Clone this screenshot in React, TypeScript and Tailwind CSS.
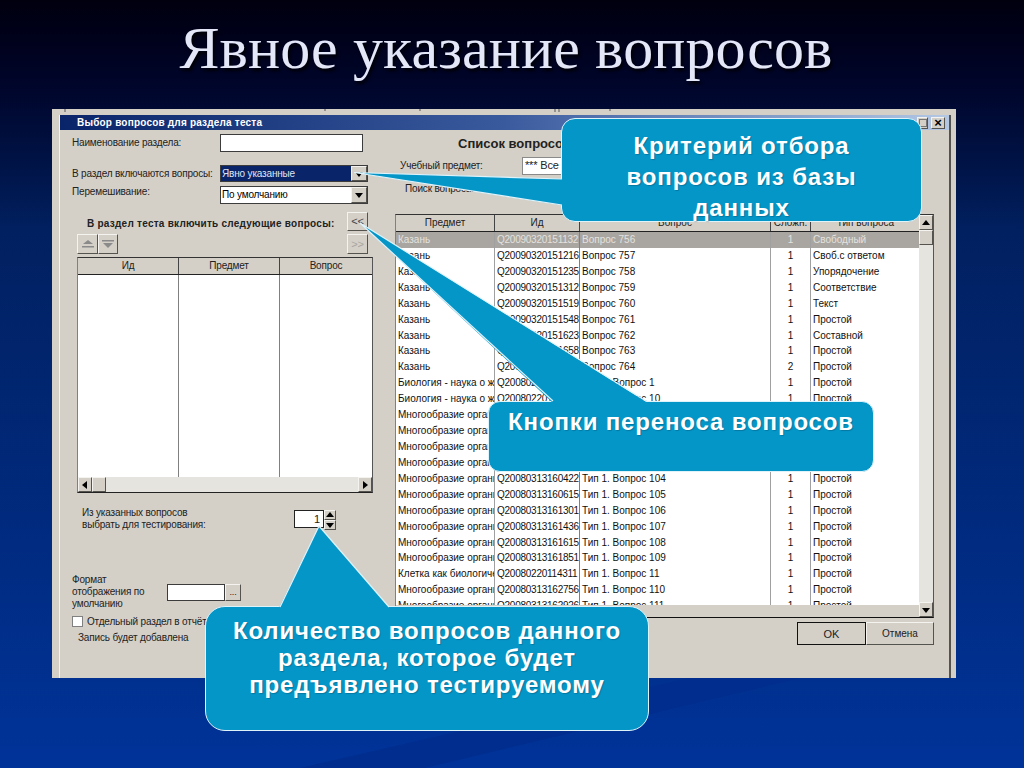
import React from "react";

type Row = [string, string, string, string, string];

const K = "Казань";
const B = "Биология - наука о жизни";
const M = "Многообразие организмов";
const rows: Row[] = [
  [K, "Q20090320151132", "Вопрос 756", "1", "Свободный"],
  [K, "Q20090320151216", "Вопрос 757", "1", "Своб.с ответом"],
  [K, "Q20090320151235", "Вопрос 758", "1", "Упорядочение"],
  [K, "Q20090320151312", "Вопрос 759", "1", "Соответствие"],
  [K, "Q20090320151519", "Вопрос 760", "1", "Текст"],
  [K, "Q20090320151548", "Вопрос 761", "1", "Простой"],
  [K, "Q20090320151623", "Вопрос 762", "1", "Составной"],
  [K, "Q20090320151658", "Вопрос 763", "1", "Простой"],
  [K, "Q20090320151720", "Вопрос 764", "2", "Простой"],
  [B, "Q20080220113940", "Тип 1. Вопрос 1", "1", "Простой"],
  [B, "Q20080220114010", "Тип 1. Вопрос 10", "1", "Простой"],
  [M, "Q20080313155900", "Тип 1. Вопрос 100", "1", "Простой"],
  [M, "Q20080313160010", "Тип 1. Вопрос 101", "1", "Простой"],
  [M, "Q20080313160120", "Тип 1. Вопрос 102", "1", "Простой"],
  [M, "Q20080313160240", "Тип 1. Вопрос 103", "1", "Простой"],
  [M, "Q20080313160422", "Тип 1. Вопрос 104", "1", "Простой"],
  [M, "Q20080313160615", "Тип 1. Вопрос 105", "1", "Простой"],
  [M, "Q20080313161301", "Тип 1. Вопрос 106", "1", "Простой"],
  [M, "Q20080313161436", "Тип 1. Вопрос 107", "1", "Простой"],
  [M, "Q20080313161615", "Тип 1. Вопрос 108", "1", "Простой"],
  [M, "Q20080313161851", "Тип 1. Вопрос 109", "1", "Простой"],
  ["Клетка как биологическая", "Q20080220114311", "Тип 1. Вопрос 11", "1", "Простой"],
  [M, "Q20080313162756", "Тип 1. Вопрос 110", "1", "Простой"],
  [M, "Q20080313162926", "Тип 1. Вопрос 111", "1", "Простой"],
];

const raised =
  "border border-t-[#f4f3f0] border-l-[#f4f3f0] border-r-[#55534e] border-b-[#55534e] bg-[#d4d0c8]";

function Tri({ dir, color = "#000" }: { dir: "up" | "down" | "left" | "right"; color?: string }) {
  const pts = {
    up: "4,1 0,6 8,6",
    down: "0,2 8,2 4,7",
    left: "6,0 6,8 1,4",
    right: "2,0 2,8 7,4",
  }[dir];
  return (
    <svg width="8" height="8" viewBox="0 0 8 8">
      <polygon points={pts} fill={color} />
    </svg>
  );
}

function Select({ text, active }: { text: string; active?: boolean }) {
  return (
    <div className="flex h-full w-[148px] items-stretch border border-[#3c3c3c] bg-white">
      <div className={`flex-1 pl-[1px] leading-[16px] ${active ? "bg-[#0a246a] text-[#dfe4f0]" : "text-black"}`}>{text}</div>
      <div className={`flex w-[16px] items-center justify-center ${raised}`}>
        <Tri dir="down" />
      </div>
    </div>
  );
}

function LeftPane() {
  return (
    <div className="flex w-[335px] shrink-0 flex-col pl-[12px] tracking-[-0.17px]">
      <div className="mt-[4px] flex h-[18px] items-center">
        <div className="w-[148px]">Наименование раздела:</div>
        <div className="h-full w-[143px] border border-[#3c3c3c] bg-white" />
      </div>
      <div className="mt-[13px] flex h-[17px] items-center">
        <div className="w-[148px]">В раздел включаются вопросы:</div>
        <Select text="Явно указанные" active />
      </div>
      <div className="mt-[4px] flex h-[18px] items-center">
        <div className="w-[148px] self-start">Перемешивание:</div>
        <Select text="По умолчанию" />
      </div>
      <div className="mt-[8px] flex h-[19px] items-center">
        <div className="w-[275px] pt-[4px] pl-[15px] text-[10px] font-bold tracking-[0.25px]">В раздел теста включить следующие вопросы:</div>
        <div className={`flex h-full w-[21px] items-center justify-center text-[11px] leading-none text-[#444] ${raised}`}>&lt;&lt;</div>
      </div>
      <div className="mt-[3px] flex h-[20px] w-[296px] justify-between pl-[5px]">
        <div className="flex">
          <div className={`flex w-[21px] items-center justify-center ${raised}`}>
            <svg width="14" height="10" viewBox="0 0 14 10">
              <polygon points="7,1 12,5 2,5" fill="#8a8a8a" />
              <rect x="1" y="7" width="12" height="1.5" fill="#8a8a8a" />
            </svg>
          </div>
          <div className={`flex w-[20px] items-center justify-center ${raised}`}>
            <svg width="14" height="10" viewBox="0 0 14 10">
              <rect x="1" y="1" width="12" height="1.5" fill="#8a8a8a" />
              <polygon points="2,4 12,4 7,9" fill="#8a8a8a" />
            </svg>
          </div>
        </div>
        <div className={`flex w-[21px] items-center justify-center text-[11px] leading-none text-[#a8a6a0] ${raised}`}>&gt;&gt;</div>
      </div>
      <div className="mt-[3px] ml-[5px] flex h-[236px] w-[296px] flex-col border border-t-[#333] border-l-[#808080] border-r-[#555] border-b-[#222]">
        <div className="grid h-[17px] shrink-0 grid-cols-[101px_101px_92px] border-b border-[#222] text-center leading-[16px]">
          <div className="border-r border-[#444]">Ид</div>
          <div className="border-r border-[#444]">Предмет</div>
          <div>Вопрос</div>
        </div>
        <div className="grid flex-1 grid-cols-[101px_101px_92px] bg-white">
          <div className="border-r border-[#808080]" />
          <div className="border-r border-[#808080]" />
          <div />
        </div>
        <div className="flex h-[15px] shrink-0 bg-[#e6e4df]">
          <div className={`flex w-[14px] items-center justify-center ${raised}`}>
            <Tri dir="left" />
          </div>
          <div className={`w-[14px] ${raised}`} />
          <div className="flex-1" />
          <div className={`flex w-[14px] items-center justify-center ${raised}`}>
            <Tri dir="right" />
          </div>
        </div>
      </div>
      <div className="mt-[17px] flex h-[18px] items-center">
        <div className="w-[222px] pl-[10px] leading-[12px]">
          Из указанных вопросов
          <br />
          выбрать для тестирования:
        </div>
        <div className="flex h-full w-[30px] items-center justify-end border border-[#222] bg-white pr-[3px] text-[11px]">1</div>
        <div className="flex h-full w-[12px] flex-col">
          <div className={`flex flex-1 items-center justify-center ${raised}`}>
            <Tri dir="up" />
          </div>
          <div className={`flex flex-1 items-center justify-center ${raised}`}>
            <Tri dir="down" />
          </div>
        </div>
      </div>
      <div className="mt-[46px] flex h-[36px] items-center">
        <div className="w-[95px] leading-[12px]">
          Формат
          <br />
          отображения по
          <br />
          умолчанию
        </div>
        <div className="h-[17px] w-[58px] border border-[#3c3c3c] bg-white" />
        <div className={`flex h-[17px] w-[16px] items-center justify-center text-[9px] leading-none ${raised}`}>...</div>
      </div>
      <div className="mt-[6px] flex h-[11px] items-center">
        <div className="h-[11px] w-[11px] border border-[#808080] bg-white" />
        <div className="pl-[4px]">Отдельный раздел в отчёте</div>
      </div>
      <div className="mt-[5px] pl-[6px] leading-[12px]">Запись будет добавлена</div>
    </div>
  );
}

function RightPane() {
  const grid = "grid grid-cols-[99px_85px_191px_40px_109px]";
  return (
    <div className="flex w-[539px] shrink-0 flex-col">
      <div className="mt-[5px] h-[17px] pl-[63px] text-[13px] leading-[17px] font-bold whitespace-nowrap">Список вопросов</div>
      <div className="mt-[5px] flex h-[18px] items-center pl-[5px] tracking-[-0.17px]">
        <div className="w-[122px]">Учебный предмет:</div>
        <div className="h-full w-[110px] border border-[#8a8a8a] bg-white pl-[2px] text-[11px] leading-[15px] whitespace-nowrap">*** Все вопросы</div>
      </div>
      <div className="mt-[8px] h-[12px] pl-[10px] leading-[12px] tracking-[-0.17px]">Поиск вопроса:</div>
      <div className="mt-[19px] flex h-[404px] border border-t-[#333] border-l-[#808080] border-r-[#555] border-b-[#111]">
        <div className="flex w-[523px] shrink-0 flex-col">
          <div className={`${grid} h-[17px] shrink-0 border-b border-[#222] text-center leading-[16px]`}>
            <div className="border-r border-[#444]">Предмет</div>
            <div className="border-r border-[#444]">Ид</div>
            <div className="border-r border-[#444]">Вопрос</div>
            <div className="border-r border-[#444]">Сложн.</div>
            <div>Тип вопроса</div>
          </div>
          <div className="h-[373px] overflow-hidden bg-white">
            {rows.map((r, i) => (
              <div
                key={r[1]}
                className={`${grid} h-[15.93px] items-stretch leading-[15px] whitespace-nowrap ${i === 0 ? "bg-[#a9a6a2] text-[#e4e2de]" : "text-[#111]"}`}
              >
                <div className="overflow-hidden border-r border-[#a0a0a0] pl-[2px]">{r[0]}</div>
                <div className="overflow-hidden border-r border-[#808080] pl-[2px] tracking-[-0.25px]">{r[1]}</div>
                <div className="overflow-hidden border-r border-[#a0a0a0] pl-[2px]">{r[2]}</div>
                <div className="overflow-hidden border-r border-[#a0a0a0] text-center">{r[3]}</div>
                <div className="overflow-hidden pl-[2px]">{r[4]}</div>
              </div>
            ))}
          </div>
        </div>
        <div className="flex flex-1 flex-col bg-[#e6e4df]">
          <div className={`flex h-[15px] items-center justify-center ${raised}`}>
            <Tri dir="up" />
          </div>
          <div className={`h-[15px] ${raised}`} />
          <div className="flex-1" />
          <div className={`flex h-[15px] items-center justify-center ${raised}`}>
            <Tri dir="down" />
          </div>
        </div>
      </div>
      <div className="mt-[4px] flex h-[23px] justify-end">
        <div className="flex w-[69px] items-center justify-center border border-[#111] bg-[#d4d0c8] text-[11px]">OK</div>
        <div className={`flex w-[68px] items-center justify-center ${raised}`}>Отмена</div>
      </div>
    </div>
  );
}

function Dialog() {
  return (
    <div
      className="ml-[52px] h-[569px] w-[904px] bg-[#d4d0c8] pt-[6px] pr-[5px] pl-[7px] text-[10px] leading-[12px] text-[#222]"
      style={{ fontFamily: '"Liberation Sans", sans-serif' }}
    >
      <div className="h-full border-l border-[#f4f3f0] border-r-2 border-r-[#55534e]">
        <div className="flex h-[15px] items-center justify-between bg-gradient-to-r from-[#0a246a] via-[#3a5a9e] to-[#b4c8e4]">
          <div className="pl-[17px] text-[10px] font-bold tracking-[0.2px] text-white">Выбор вопросов для раздела теста</div>
          <div className="flex h-[12px] gap-[3px] pr-[4px]">
            <div className={`flex w-[11px] items-center justify-center ${raised}`}>
              <div className="h-[8px] w-[8px] border border-[#777]" />
            </div>
            <div className={`flex w-[14px] items-center justify-center text-[13px] leading-none font-bold text-black ${raised}`}>×</div>
          </div>
        </div>
        <div className="flex">
          <LeftPane />
          <RightPane />
        </div>
      </div>
    </div>
  );
}

const box =
  "absolute z-10 border-[1.5px] border-[#dff3fb] bg-[#0596c8] text-center text-[24px] font-bold tracking-[0.85px] whitespace-nowrap text-white [text-shadow:1px_1px_1px_rgba(0,0,0,0.2)]";

export default function App() {
  return (
    <div className="relative h-[768px] w-[1024px] overflow-hidden bg-gradient-to-b from-[#00000f] via-[#012060] via-30% to-[#003399]">
      <svg className="absolute top-0 left-0" width="1024" height="768" viewBox="0 0 1024 768">
        <polygon points="300,768 425,768 800,678 690,678" fill="#002d8e" />
      </svg>
      <div className="relative flex h-[109px] items-start justify-center pt-[8px] pr-[12px]">
        <h1
          className="text-[60px] leading-[80px] font-normal tracking-[0.12px] whitespace-nowrap text-[#e4e7f8] [text-shadow:2px_3px_3px_rgba(0,0,0,0.8)]"
          style={{ fontFamily: '"Liberation Serif", serif' }}
        >
          Явное указание вопросов
        </h1>
      </div>
      <div className="relative">
        <Dialog />
      </div>

      <div
        className={`${box} top-[118px] left-[561px] h-[104px] w-[361px] rounded-[14px] pt-[11px] leading-[31px]`}
        style={{ fontFamily: '"Liberation Sans", sans-serif' }}
      >
        Критерий отбора
        <br />
        вопросов из базы
        <br />
        данных
      </div>
      <div
        className={`${box} top-[401px] left-[488px] h-[71px] w-[386px] rounded-[12px] pt-[4px] leading-[31px]`}
        style={{ fontFamily: '"Liberation Sans", sans-serif' }}
      >
        Кнопки переноса вопросов
      </div>
      <div
        className={`${box} top-[606px] left-[205px] h-[125px] w-[444px] rounded-[20px] pt-[10px] leading-[27px]`}
        style={{ fontFamily: '"Liberation Sans", sans-serif' }}
      >
        Количество вопросов данного
        <br />
        раздела, которое будет
        <br />
        предъявлено тестируемому
      </div>

      <svg className="absolute top-0 left-0 z-20" width="1024" height="768" viewBox="0 0 1024 768">
        <path d="M65 109v3M325 109v2M420 109v2M555 109v3M559 109v3M610 109v2" stroke="#555" strokeWidth="1" />
        <polygon points="354,172.5 564,179 564,205.5" fill="#0596c8" />
        <path d="M354 172.5 L562 179 M354 172.5 L562 205" stroke="#dff3fb" strokeWidth="1.2" fill="none" />
        <polygon points="360,223 648,403 553,403" fill="#0596c8" />
        <path d="M360 223 L646 401 M360 223 L553 401" stroke="#dff3fb" strokeWidth="1.2" fill="none" />
        <polygon points="319,526 390,608 279,608" fill="#0596c8" />
        <path d="M319 526 L389 607 M319 526 L280 607" stroke="#dff3fb" strokeWidth="1.2" fill="none" />
      </svg>
    </div>
  );
}
